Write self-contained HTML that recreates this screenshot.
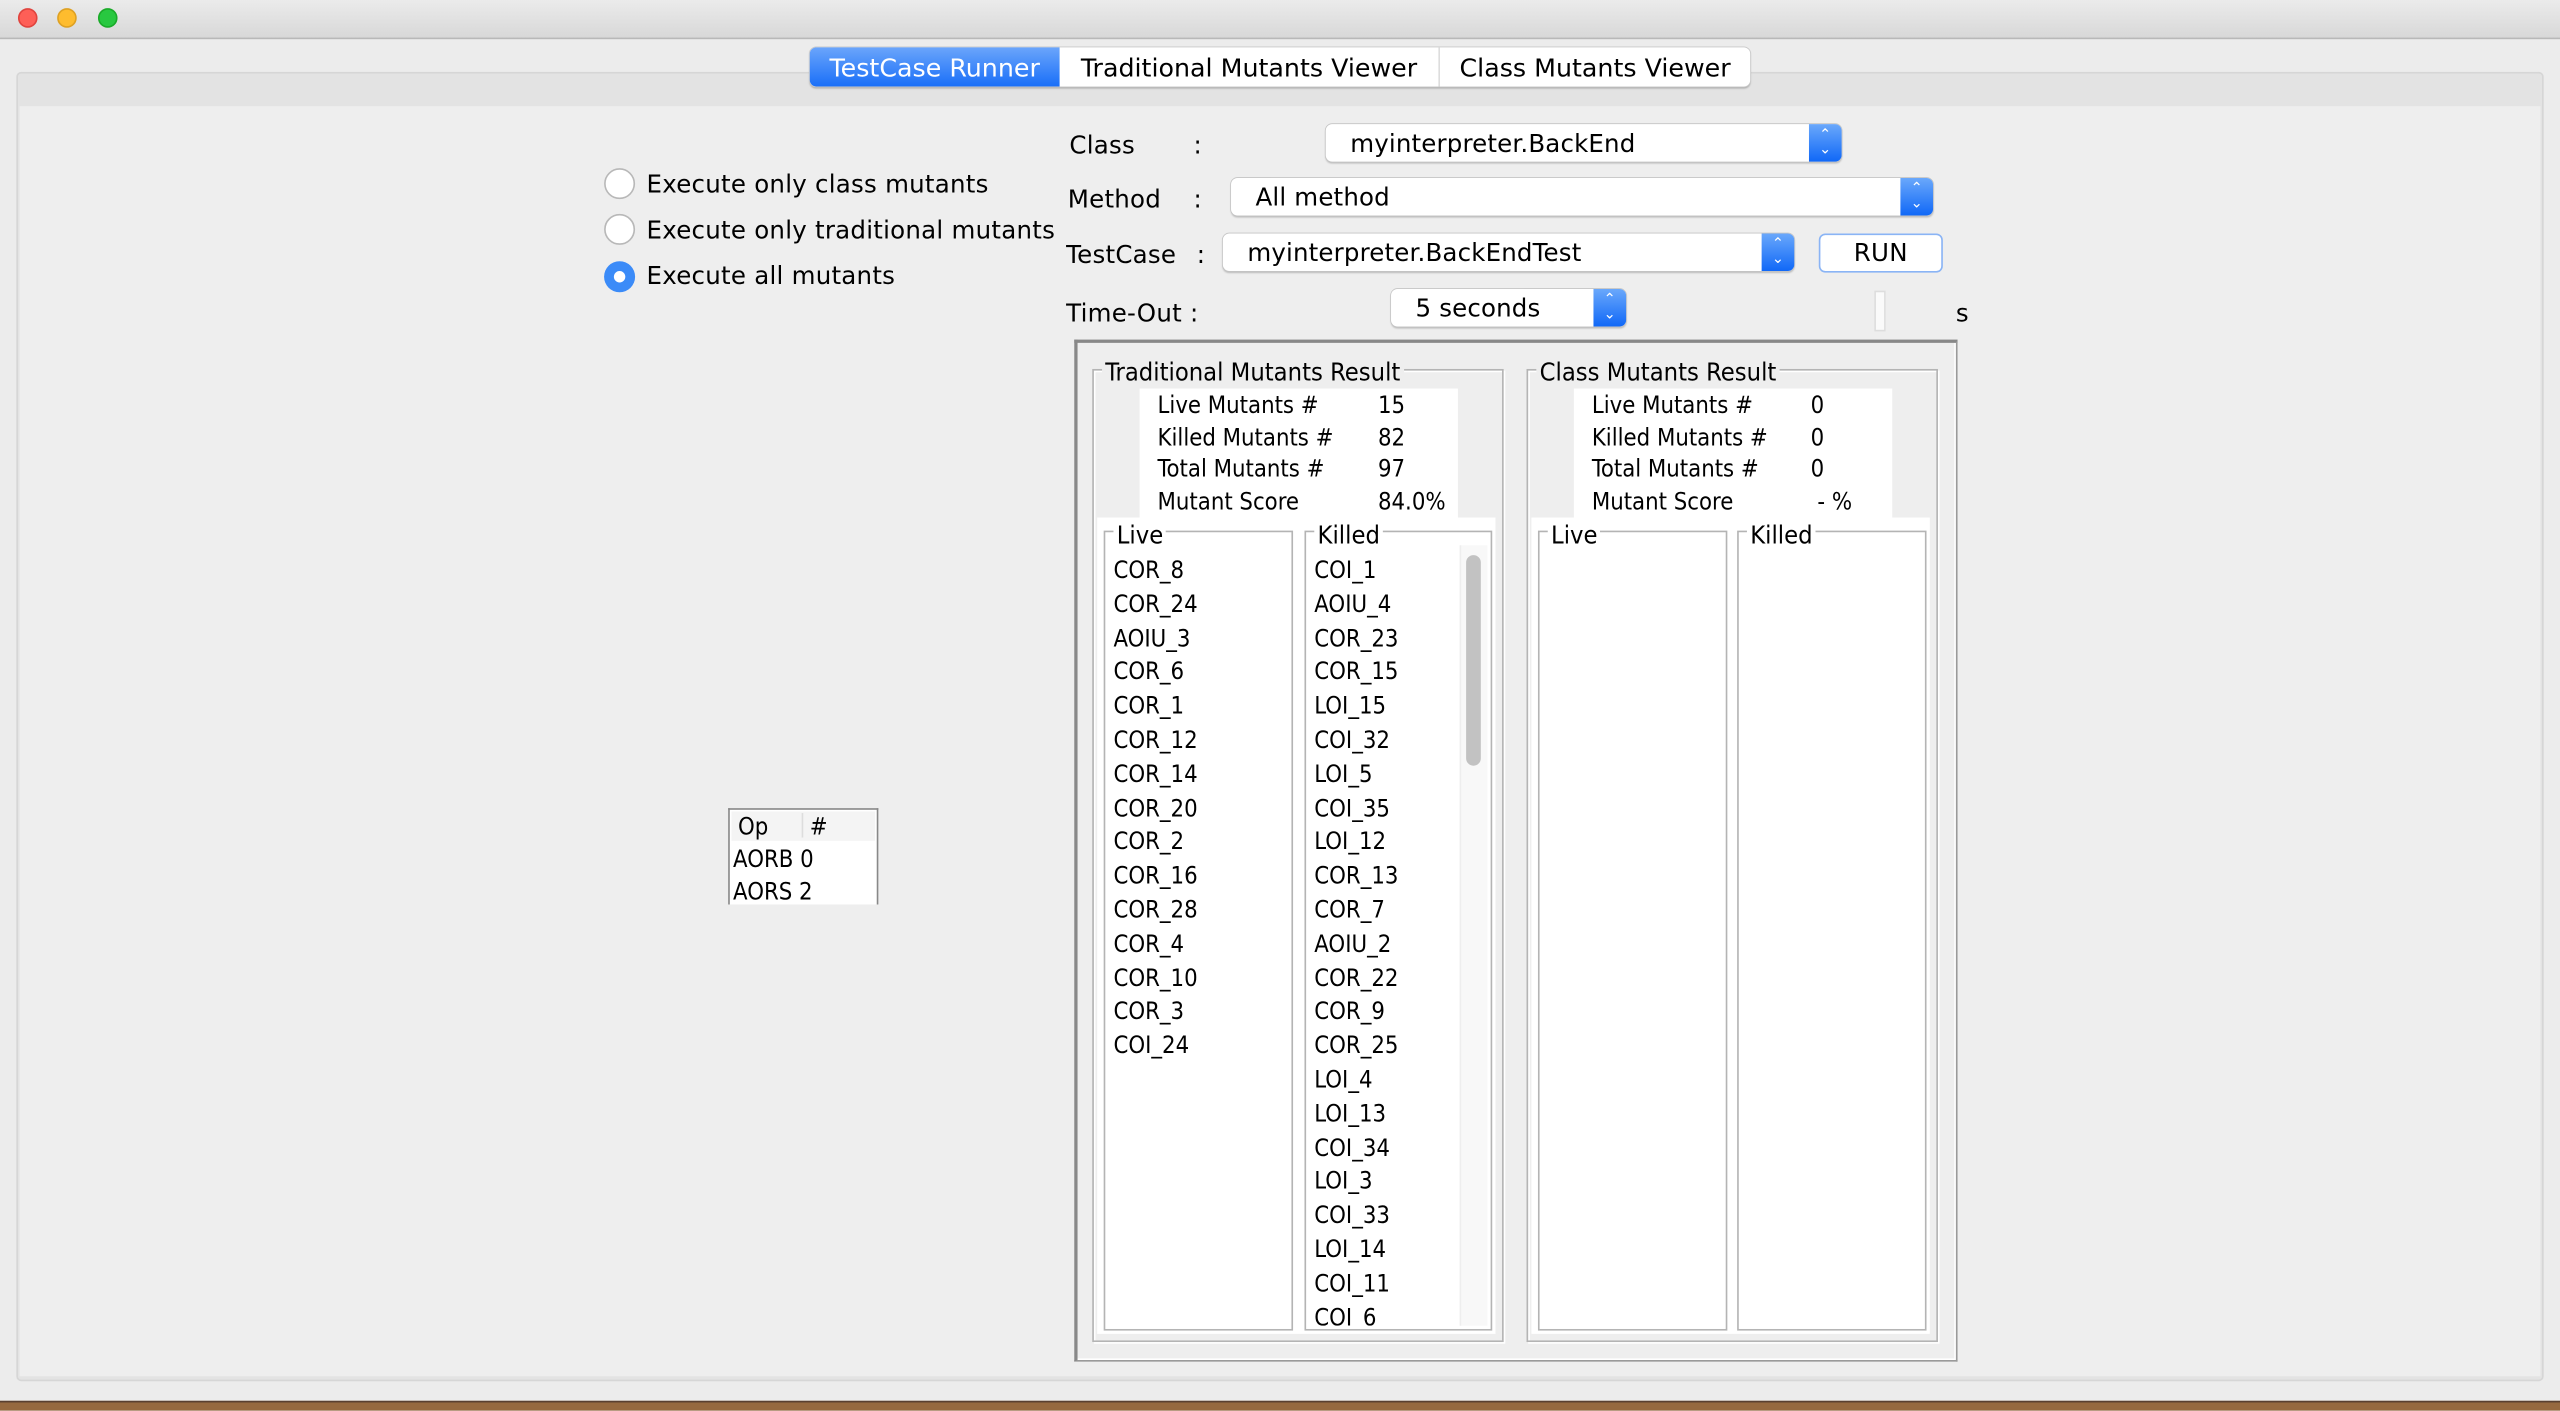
<!DOCTYPE html>
<html><head><meta charset="utf-8"><style>
*{margin:0;padding:0;box-sizing:border-box}
html,body{width:2560px;height:1411px;overflow:hidden;background:#ececec}
#w{position:absolute;left:0;top:0;width:1568px;height:864px;transform:scale(1.63265);transform-origin:0 0;font-family:"DejaVu Sans","Liberation Sans",sans-serif;color:#000;background:#ececec}
.a{position:absolute}
.t{font-size:15px;line-height:18px;white-space:nowrap;letter-spacing:0.15px}
.c{font-family:"DejaVu Sans Condensed","DejaVu Sans","Liberation Sans",sans-serif;font-size:14.5px;line-height:18px;white-space:nowrap}
.combo{position:absolute;background:#fff;border-radius:4px;box-shadow:0 0 0 0.5px #c4c4c4,0 1px 1px #bbb;font-size:15px;line-height:24px;padding-left:15px;letter-spacing:0.1px}
.combo .ar{position:absolute;right:0;top:0;bottom:0;width:20px;background:linear-gradient(#6aa8fb,#1068f7);border-radius:0 4px 4px 0;color:#fff;font-size:9px;line-height:9px;text-align:center;padding-top:3px}
.tb{position:absolute;border:1px solid #b4b4b4;box-shadow:inset 1px 1px 0 #fff,1px 1px 0 #fff}
.list div{height:20.8px}
</style></head><body><div id="w">
<div class="a" style="left:0;top:0;width:1568px;height:24px;background:linear-gradient(#ebebeb,#d8d8d8);border-bottom:1px solid #b8b8b8"></div>
<div class="a" style="left:11px;top:5px;width:12px;height:12px;border-radius:50%;background:#fe5f57;border:0.5px solid #e0443e"></div>
<div class="a" style="left:35px;top:5px;width:12px;height:12px;border-radius:50%;background:#febc2e;border:0.5px solid #dea123"></div>
<div class="a" style="left:60px;top:5px;width:12px;height:12px;border-radius:50%;background:#28c840;border:0.5px solid #1aab29"></div>
<div class="a" style="left:10px;top:44px;width:1548px;height:802px;background:#e3e3e3;border:1px solid #d6d6d6;border-radius:3px"></div>
<div class="a" style="left:12px;top:65px;width:1544px;height:778px;background:#eeeeee"></div>
<div class="a" style="left:0;top:858px;width:1568px;height:6px;background:#96693f;border-top:1px solid #5a4030"></div>
<div class="a" style="left:496px;top:29px;width:576px;height:24px;background:#fff;border-radius:4px;box-shadow:0 0 0 0.5px #c8c8c8,0 1px 1px #aaa"></div>
<div class="a t" style="left:496px;top:29px;width:153px;height:24px;background:linear-gradient(#6aa5fb,#1a6ff8);border-radius:4px 0 0 4px;color:#fff;line-height:26px;text-align:center;font-size:15.5px;letter-spacing:0">TestCase Runner</div>
<div class="a t" style="left:649px;top:29px;width:233px;height:24px;line-height:26px;text-align:center;border-right:1px solid #ddd;font-size:15.5px;letter-spacing:0">Traditional Mutants Viewer</div>
<div class="a t" style="left:882px;top:29px;width:190px;height:24px;line-height:26px;text-align:center;font-size:15.5px;letter-spacing:0">Class Mutants Viewer</div>
<div class="a" style="left:370px;top:103px;width:19px;height:19px;border-radius:50%;background:#fff;border:1px solid #b8b8b8"></div>
<div class="a t" style="left:396px;top:104px">Execute only class mutants</div>
<div class="a" style="left:370px;top:131px;width:19px;height:19px;border-radius:50%;background:#fff;border:1px solid #b8b8b8"></div>
<div class="a t" style="left:396px;top:132px">Execute only traditional mutants</div>
<div class="a" style="left:370px;top:160px;width:19px;height:19px;border-radius:50%;background:#3b8bf8"></div>
<div class="a" style="left:376px;top:166px;width:7px;height:7px;border-radius:50%;background:#fff"></div>
<div class="a t" style="left:396px;top:160px">Execute all mutants</div>
<div class="a t" style="left:655px;top:80px">Class</div><div class="a t" style="left:731px;top:80px">:</div>
<div class="combo" style="left:812px;top:76px;width:316px;height:23px">myinterpreter.BackEnd<div class="ar">&#8963;<br>&#8964;</div></div>
<div class="a t" style="left:654px;top:113px">Method</div><div class="a t" style="left:731px;top:113px">:</div>
<div class="combo" style="left:754px;top:109px;width:430px;height:23px">All method<div class="ar">&#8963;<br>&#8964;</div></div>
<div class="a t" style="left:653px;top:147px">TestCase</div><div class="a t" style="left:733px;top:147px">:</div>
<div class="combo" style="left:749px;top:143px;width:350px;height:23px">myinterpreter.BackEndTest<div class="ar">&#8963;<br>&#8964;</div></div>
<div class="a t" style="left:1114px;top:143px;width:76px;height:24px;background:#fff;border:1px solid #8ab4f5;border-radius:4px;text-align:center;line-height:23px">RUN</div>
<div class="a t" style="left:653px;top:183px">Time-Out :</div>
<div class="combo" style="left:852px;top:177px;width:144px;height:23px">5 seconds<div class="ar">&#8963;<br>&#8964;</div></div>
<div class="a" style="left:1148px;top:178px;width:7px;height:25px;background:#fafafa;border:1px solid #ddd"></div>
<div class="a t" style="left:1198px;top:183px">s</div>
<div class="a" style="left:658px;top:208px;width:541px;height:626px;border:1px solid #9a9a9a;border-top:2px solid #888;border-left:2px solid #888;background:#eeeeee;box-shadow:inset -1px -1px 0 #fff"></div>
<div class="tb" style="left:669px;top:226px;width:252px;height:596px"></div>
<div class="a c" style="left:675px;top:219px;background:#eeeeee;padding:0 2px;font-size:15.5px">Traditional Mutants Result</div>
<div class="a" style="left:698px;top:238px;width:195px;height:80px;background:#fff"></div>
<div class="a c" style="left:709px;top:240px;line-height:19.6px">Live Mutants #<br>Killed Mutants #<br>Total Mutants #<br>Mutant Score</div>
<div class="a c" style="left:844px;top:240px;line-height:19.6px">15<br>82<br>97<br>84.0%</div>
<div class="a" style="left:672px;top:317px;width:244px;height:500px;background:#fff"></div>
<div class="tb" style="left:676px;top:325px;width:116px;height:490px;background:#fff"></div>
<div class="a c" style="left:682px;top:319px;background:#fff;padding:0 2px;font-size:15.5px">Live</div>
<div class="a c list" style="left:682px;top:341px"><div>COR_8</div><div>COR_24</div><div>AOIU_3</div><div>COR_6</div><div>COR_1</div><div>COR_12</div><div>COR_14</div><div>COR_20</div><div>COR_2</div><div>COR_16</div><div>COR_28</div><div>COR_4</div><div>COR_10</div><div>COR_3</div><div>COI_24</div></div>
<div class="tb" style="left:799px;top:325px;width:115px;height:490px;background:#fff;overflow:hidden"></div>
<div class="a c" style="left:805px;top:319px;background:#fff;padding:0 2px;font-size:15.5px">Killed</div>
<div class="a" style="left:800px;top:334px;width:94px;height:478px;overflow:hidden"><div class="c list" style="padding:7px 0 0 5px"><div>COI_1</div><div>AOIU_4</div><div>COR_23</div><div>COR_15</div><div>LOI_15</div><div>COI_32</div><div>LOI_5</div><div>COI_35</div><div>LOI_12</div><div>COR_13</div><div>COR_7</div><div>AOIU_2</div><div>COR_22</div><div>COR_9</div><div>COR_25</div><div>LOI_4</div><div>LOI_13</div><div>COI_34</div><div>LOI_3</div><div>COI_33</div><div>LOI_14</div><div>COI_11</div><div>COI_6</div></div></div>
<div class="a" style="left:894px;top:334px;width:17px;height:478px;background:#f8f8f8;border-left:1px solid #eee"></div>
<div class="a" style="left:898px;top:340px;width:9px;height:129px;background:#c2c2c2;border-radius:5px"></div>
<div class="tb" style="left:935px;top:226px;width:252px;height:596px"></div>
<div class="a c" style="left:941px;top:219px;background:#eeeeee;padding:0 2px;font-size:15.5px">Class Mutants Result</div>
<div class="a" style="left:964px;top:238px;width:195px;height:80px;background:#fff"></div>
<div class="a c" style="left:975px;top:240px;line-height:19.6px">Live Mutants #<br>Killed Mutants #<br>Total Mutants #<br>Mutant Score</div>
<div class="a c" style="left:1109px;top:240px;line-height:19.6px">0<br>0<br>0<br>&nbsp;- %</div>
<div class="a" style="left:938px;top:317px;width:244px;height:500px;background:#fff"></div>
<div class="tb" style="left:942px;top:325px;width:116px;height:490px;background:#fff"></div>
<div class="a c" style="left:948px;top:319px;background:#fff;padding:0 2px;font-size:15.5px">Live</div>
<div class="tb" style="left:1064px;top:325px;width:116px;height:490px;background:#fff"></div>
<div class="a c" style="left:1070px;top:319px;background:#fff;padding:0 2px;font-size:15.5px">Killed</div>
<div class="a" style="left:446px;top:495px;width:92px;height:59px;border:1px solid #888;border-bottom:none;background:#fff"></div>
<div class="a" style="left:448px;top:497px;width:88px;height:18px;background:#f4f4f4"></div>
<div class="a" style="left:491px;top:498px;width:1px;height:15px;background:#ddd"></div>
<div class="a c" style="left:452px;top:498px">Op</div>
<div class="a c" style="left:496px;top:498px">#</div>
<div class="a c" style="left:449px;top:518px;line-height:19.5px">AORB 0<br>AORS 2</div>
</div></body></html>
